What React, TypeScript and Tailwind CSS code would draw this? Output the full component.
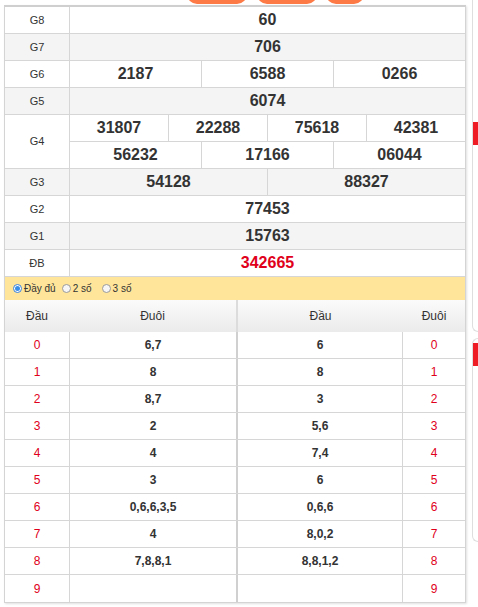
import React from "react";

type Row = { label: string; lines: string[][]; gray: boolean; red?: boolean };

const rows: Row[] = [
  { label: "G8", lines: [["60"]], gray: false },
  { label: "G7", lines: [["706"]], gray: true },
  { label: "G6", lines: [["2187", "6588", "0266"]], gray: false },
  { label: "G5", lines: [["6074"]], gray: true },
  {
    label: "G4",
    lines: [
      ["31807", "22288", "75618", "42381"],
      ["56232", "17166", "06044"],
    ],
    gray: false,
  },
  { label: "G3", lines: [["54128", "88327"]], gray: true },
  { label: "G2", lines: [["77453"]], gray: false },
  { label: "G1", lines: [["15763"]], gray: true },
  { label: "ĐB", lines: [["342665"]], gray: false, red: true },
];

const loto: { d: string; left: string; right: string }[] = [
  { d: "0", left: "6,7", right: "6" },
  { d: "1", left: "8", right: "8" },
  { d: "2", left: "8,7", right: "3" },
  { d: "3", left: "2", right: "5,6" },
  { d: "4", left: "4", right: "7,4" },
  { d: "5", left: "3", right: "6" },
  { d: "6", left: "0,6,6,3,5", right: "0,6,6" },
  { d: "7", left: "4", right: "8,0,2" },
  { d: "8", left: "7,8,8,1", right: "8,8,1,2" },
  { d: "9", left: "", right: "" },
];

function Radio({ checked }: { checked?: boolean }) {
  return (
    <span
      className={`inline-flex items-center justify-center w-[9px] h-[9px] rounded-full border ${
        checked ? "border-[#3b7fd6] bg-white" : "border-[#9a9a9a] bg-[#f6f6f6]"
      }`}
    >
      {checked && <span className="w-[5px] h-[5px] rounded-full bg-[#3b8ee8]" />}
    </span>
  );
}

export default function App() {
  return (
    <div className="w-[478px] h-[607px] overflow-hidden bg-white flex font-['Liberation_Sans',Arial,sans-serif] text-[#333]">
      <div className="ml-[4px] w-[463px] flex flex-col">
        {/* orange buttons peeking from above */}
        <div className="h-[5px] overflow-hidden flex">
          <div className="ml-[183px] w-[60px] h-[20px] mt-[-16px] rounded-[10px] bg-[#fd7a47]" />
          <div className="ml-[10px] w-[60px] h-[20px] mt-[-16px] rounded-[10px] bg-[#fd7a47]" />
          <div className="ml-[9px] w-[38px] h-[20px] mt-[-16px] rounded-[10px] bg-[#fd7a47]" />
        </div>

        <div className="border-t-2 border-t-[#cfcfcf] border-x border-x-[#d4d4d4] border-b border-b-[#d4d4d4] shadow-[1px_1px_2px_rgba(0,0,0,0.12)]">
          {rows.map((r) => (
            <div
              key={r.label}
              className={`flex border-b border-[#d6d6d6] ${r.gray ? "bg-[#f4f4f4]" : "bg-white"}`}
            >
              <div className="w-[65px] shrink-0 flex items-center justify-center text-[11px] border-r border-[#d6d6d6]">
                {r.label}
              </div>
              <div className="flex-1 flex flex-col">
                {r.lines.map((line, i) => (
                  <div
                    key={i}
                    className={`flex h-[26px] ${i > 0 ? "border-t border-[#d6d6d6] h-[27px]" : ""}`}
                  >
                    {line.map((v, j) => (
                      <div
                        key={j}
                        className={`flex-1 flex items-center justify-center text-[16px] font-bold ${
                          j > 0 ? "border-l border-[#d6d6d6]" : ""
                        } ${r.red ? "text-[#e0001b]" : "text-[#333]"}`}
                      >
                        {v}
                      </div>
                    ))}
                  </div>
                ))}
              </div>
            </div>
          ))}

          {/* radio row */}
          <div className="h-[23px] bg-[#fee59a] flex items-center pl-[8px] text-[10px] text-[#333]">
            <label className="flex items-center gap-[2px]">
              <Radio checked />
              <span>Đầy đủ</span>
            </label>
            <label className="flex items-center gap-[2px] ml-[6px]">
              <Radio />
              <span>2 số</span>
            </label>
            <label className="flex items-center gap-[2px] ml-[10px]">
              <Radio />
              <span>3 số</span>
            </label>
          </div>

          {/* loto header */}
          <div className="flex h-[32px] bg-gradient-to-b from-[#fbfbfb] to-[#ebebeb] text-[12px]">
            <div className="w-[232px] flex border-r border-[#dcdcdc]">
              <div className="w-[64px] flex items-center justify-center">Đầu</div>
              <div className="flex-1 flex items-center justify-center">Đuôi</div>
            </div>
            <div className="flex-1 flex border-l border-[#dcdcdc]">
              <div className="w-[165px] flex items-center justify-center">Đầu</div>
              <div className="flex-1 flex items-center justify-center">Đuôi</div>
            </div>
          </div>

          {/* loto body */}
          {loto.map((l, i) => (
            <div key={l.d} className={`flex h-[27px] ${i < loto.length - 1 ? "border-b border-[#d6d6d6]" : "h-[26px]"} text-[12px]`}>
              <div className="w-[232px] flex border-r border-[#d0d0d0]">
                <div className="w-[65px] flex items-center justify-center border-r border-[#d6d6d6] text-[#e0001b]">
                  {l.d}
                </div>
                <div className="flex-1 flex items-center justify-center font-bold">{l.left}</div>
              </div>
              <div className="flex-1 flex border-l border-[#d0d0d0]">
                <div className="w-[165px] flex items-center justify-center border-r border-[#d6d6d6] font-bold">
                  {l.right}
                </div>
                <div className="flex-1 flex items-center justify-center text-[#e0001b]">{l.d}</div>
              </div>
            </div>
          ))}
        </div>
      </div>

      {/* right side panels */}
      <div className="ml-[6px] flex-1 flex flex-col">
        <div className="h-[332px] border-l border-b border-[#dedede] rounded-bl-[6px] pt-[122px]">
          <div className="h-[23px] w-[5px] bg-[#ee1c25]" />
        </div>
        <div className="mt-[6px] h-[204px] border-l border-t border-b border-[#dedede] rounded-l-[6px] pt-[4px]">
          <div className="h-[23px] w-[5px] bg-[#ee1c25]" />
        </div>
      </div>
    </div>
  );
}
